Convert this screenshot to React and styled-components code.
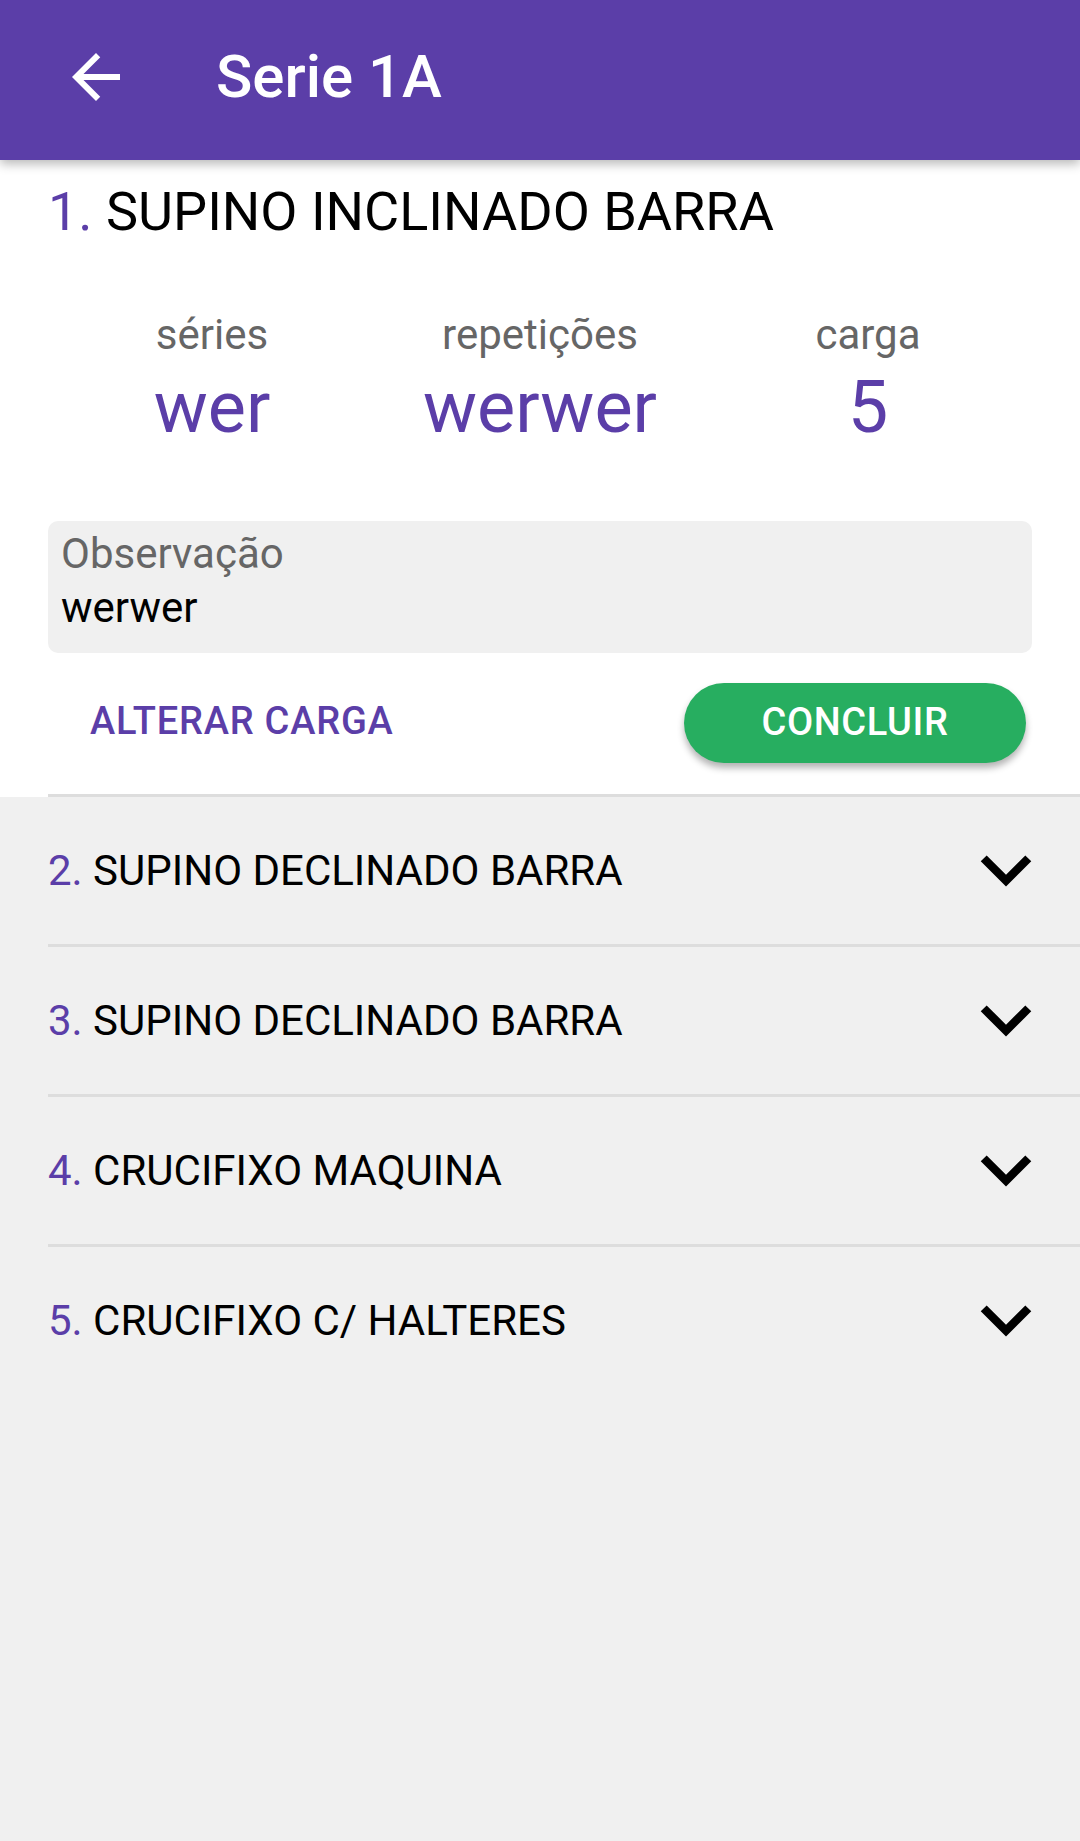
import styled, { createGlobalStyle } from 'styled-components'

const PURPLE = '#5b3ea8'

const GlobalStyle = createGlobalStyle`
  html, body {
    margin: 0;
    padding: 0;
    background: #f0f0f0;
  }
  body {
    font-family: Roboto, 'Noto Sans', sans-serif;
    min-height: 1841px;
  }
`

const Screen = styled.div`
  width: 1080px;
  min-height: 1841px;
  background: #f0f0f0;
`

const Toolbar = styled.header`
  position: relative;
  z-index: 2;
  height: 160px;
  box-sizing: border-box;
  padding: 0 0 6px 12px;
  display: flex;
  align-items: center;
  background: ${PURPLE};
  box-shadow: 0 4px 10px rgba(0, 0, 0, 0.28);
`

const NavButton = styled.div`
  width: 168px;
  height: 72px;
  display: flex;
  align-items: center;
  justify-content: center;
`

const Title = styled.h1`
  margin: 0 0 0 36px;
  font-size: 60px;
  line-height: 72px;
  font-weight: 500;
  color: #fff;
`

const Card = styled.section`
  background: #fff;
  padding: 20px 48px 0;
`

const ExerciseName = styled.div`
  font-size: 54px;
  line-height: 64px;
  color: #000;
`

const Number = styled.span`
  color: ${PURPLE};
`

const Stats = styled.div`
  display: grid;
  grid-template-columns: repeat(3, 1fr);
  margin-top: 66px;
  text-align: center;
`

const StatLabel = styled.div`
  font-size: 42px;
  line-height: 50px;
  color: #666;
`

const StatValue = styled.div`
  margin-top: 6px;
  font-size: 72px;
  line-height: 84px;
  color: ${PURPLE};
`

const NoteBox = styled.div`
  margin-top: 71px;
  height: 132px;
  box-sizing: border-box;
  padding: 8px 13px 0;
  background: #f0f0f0;
  border-radius: 10px;
`

const NoteLabel = styled.div`
  font-size: 42px;
  line-height: 50px;
  color: #666;
`

const NoteText = styled.div`
  margin-top: 4px;
  font-size: 42px;
  line-height: 50px;
  color: #000;
`

const Actions = styled.div`
  display: flex;
  align-items: center;
  justify-content: space-between;
  padding: 30px 6px 34px 0;
`

const TextButton = styled.button`
  background: transparent;
  border: none;
  padding: 0 0 4px 42px;
  font-family: inherit;
  font-size: 38px;
  font-weight: 500;
  letter-spacing: 0.8px;
  color: ${PURPLE};
`

const DoneButton = styled.button`
  width: 342px;
  height: 80px;
  padding: 0 0 3px;
  border: none;
  border-radius: 40px;
  background: #27ae60;
  color: #fff;
  font-family: inherit;
  font-size: 38px;
  font-weight: 500;
  letter-spacing: 0.6px;
  box-shadow: 0 5px 7px rgba(0, 0, 0, 0.3);
`

const List = styled.ul`
  list-style: none;
  margin: -3px 0 0;
  padding: 0;
`

const Row = styled.li`
  margin-left: 48px;
  padding-right: 48px;
  height: 150px;
  box-sizing: border-box;
  border-top: 3px solid #dddddd;
  display: flex;
  align-items: center;
  justify-content: space-between;
  font-size: 42px;
  color: #000;
`

const Back = () => (
  <svg width="72" height="72" viewBox="0 0 24 24">
    <path
      fill="#fff"
      d="M20 11H7.83l5.59-5.59L12 4l-8 8 8 8 1.41-1.41L7.83 13H20v-2z"
    />
  </svg>
)

const Chevron = () => (
  <svg width="52" height="32" viewBox="5.9 8.5 12.2 7.6">
    <path fill="#000" d="M16.59 8.59L12 13.17 7.41 8.59 6 10l6 6 6-6z" />
  </svg>
)

const exercises = [
  'SUPINO DECLINADO BARRA',
  'SUPINO DECLINADO BARRA',
  'CRUCIFIXO MAQUINA',
  'CRUCIFIXO C/ HALTERES'
]

const stats = [
  { label: 'séries', value: 'wer' },
  { label: 'repetições', value: 'werwer' },
  { label: 'carga', value: '5' }
]

export default function App() {
  return (
    <Screen>
      <GlobalStyle />
      <Toolbar>
        <NavButton>
          <Back />
        </NavButton>
        <Title>Serie 1A</Title>
      </Toolbar>

      <Card>
        <ExerciseName>
          <Number>1.</Number> SUPINO INCLINADO BARRA
        </ExerciseName>
        <Stats>
          {stats.map(s => (
            <div key={s.label}>
              <StatLabel>{s.label}</StatLabel>
              <StatValue>{s.value}</StatValue>
            </div>
          ))}
        </Stats>
        <NoteBox>
          <NoteLabel>Observação</NoteLabel>
          <NoteText>werwer</NoteText>
        </NoteBox>
        <Actions>
          <TextButton>ALTERAR CARGA</TextButton>
          <DoneButton>CONCLUIR</DoneButton>
        </Actions>
      </Card>

      <List>
        {exercises.map((name, i) => (
          <Row key={i}>
            <span>
              <Number>{i + 2}.</Number> {name}
            </span>
            <Chevron />
          </Row>
        ))}
      </List>
    </Screen>
  )
}
